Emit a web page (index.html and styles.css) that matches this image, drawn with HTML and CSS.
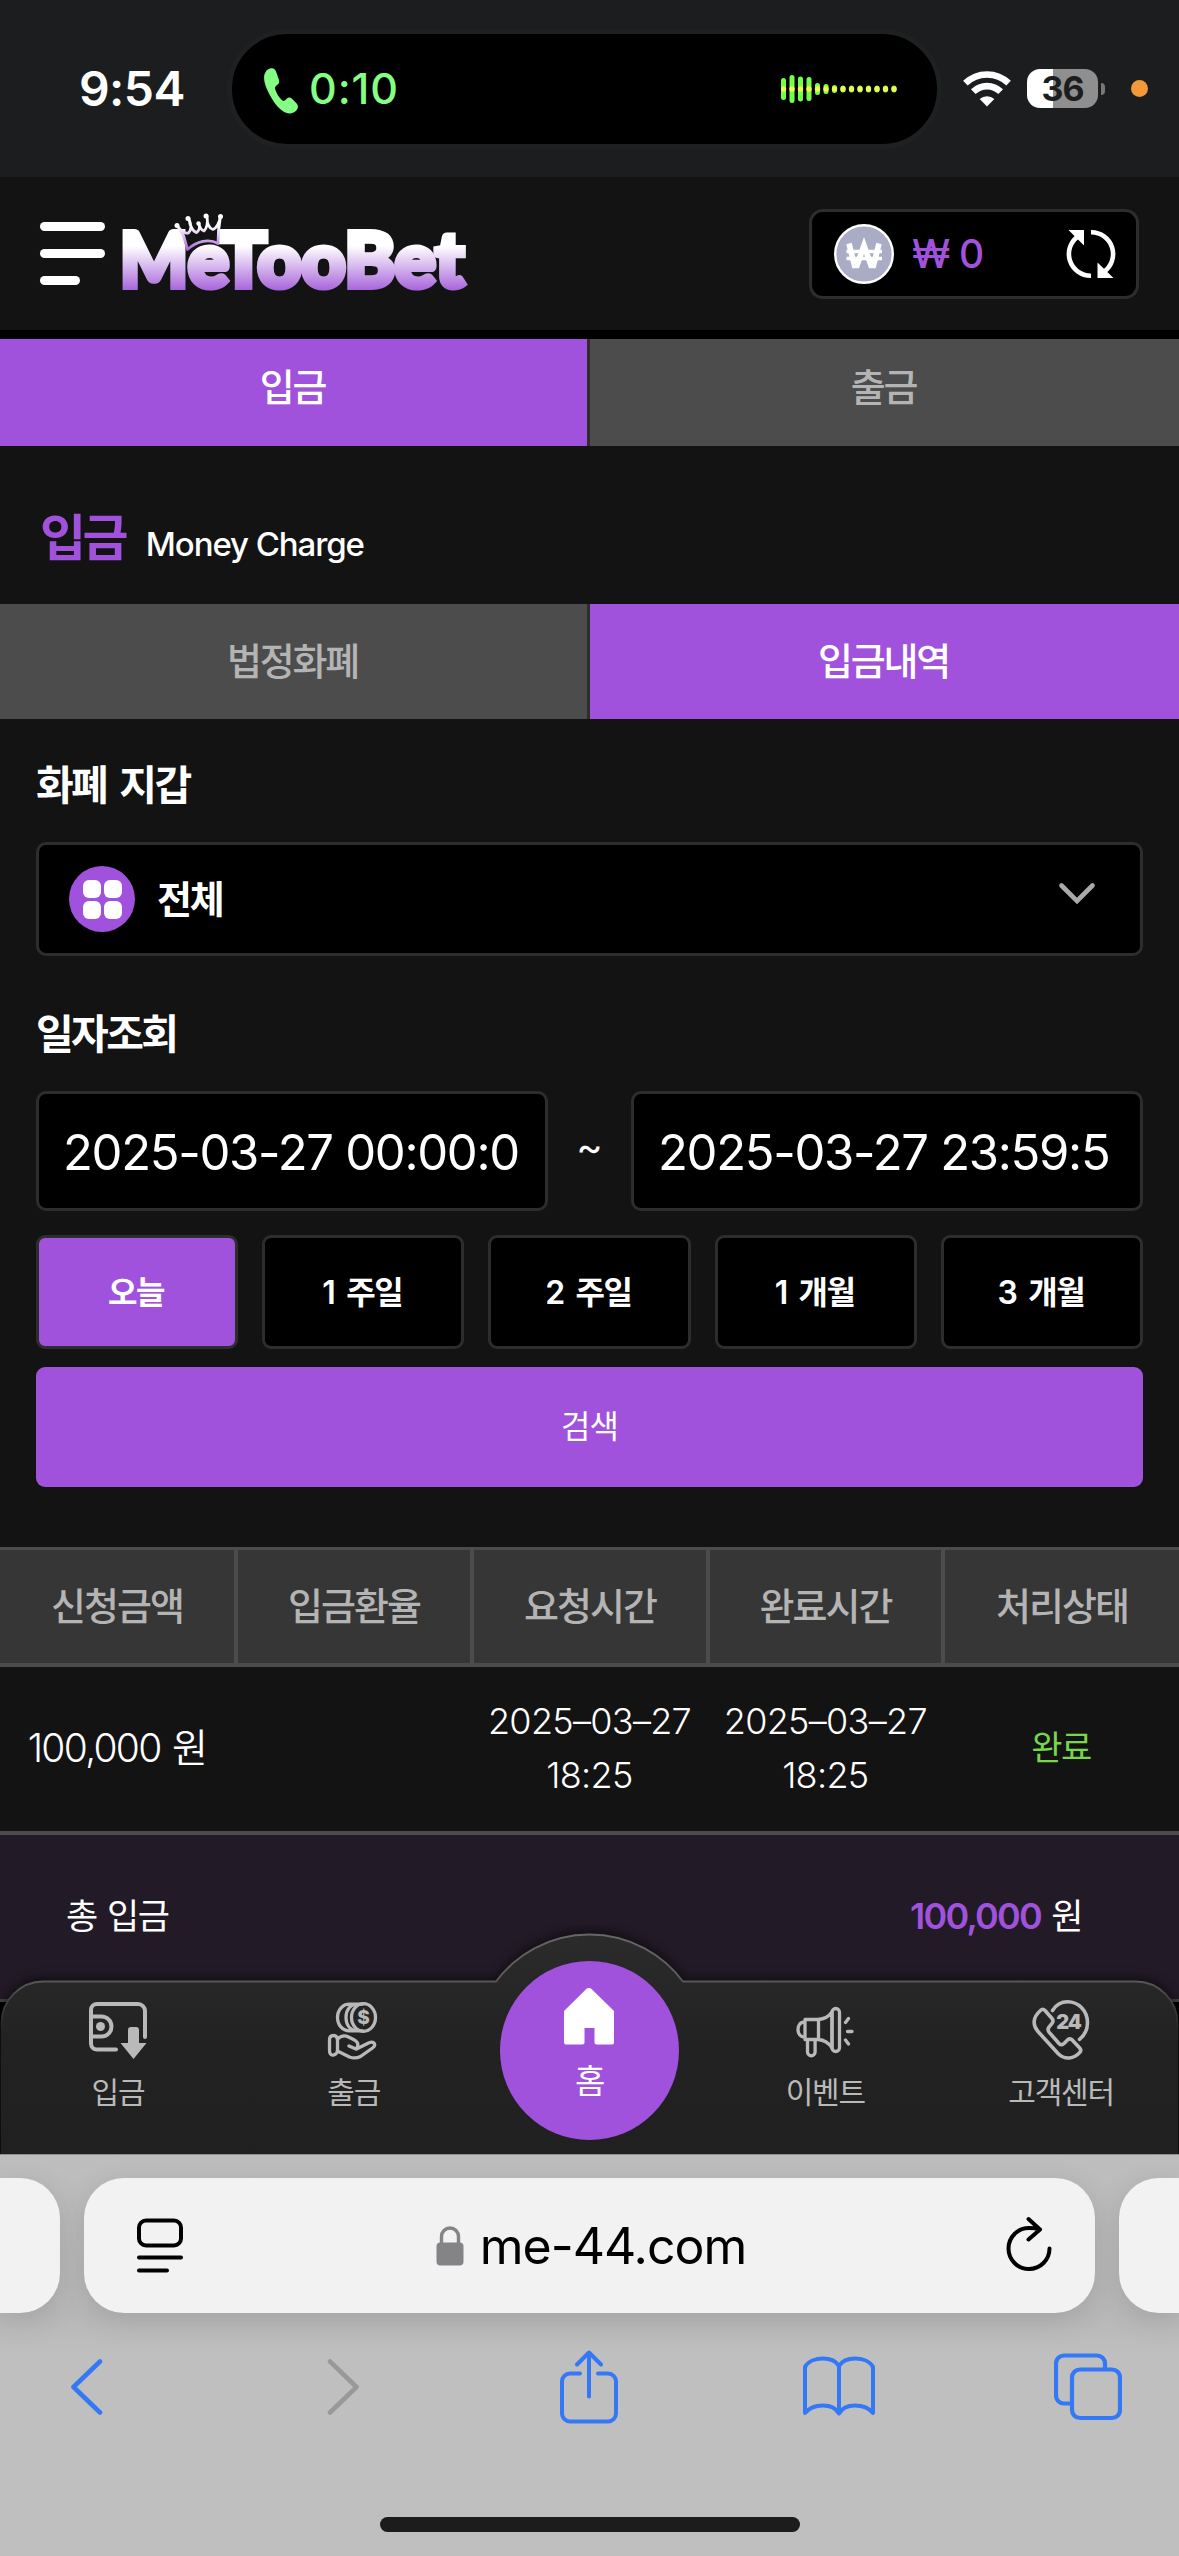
FILE: index.html
```html
<!DOCTYPE html>
<html lang="ko">
<head>
<meta charset="utf-8">
<title>MeTooBet - 입금내역</title>
<link rel="stylesheet" href="styles.css">
</head>
<body>
<div class="screen">
  <div class="status">
    <div class="clock">9:54</div>
    <div class="island">
      <svg class="ico-call" width="34" height="46" viewBox="0 0 34 46"><path d="M6 .6C9-.4 11.300 1 12.200 4L15 12c.6 2.200-.2 3.800-1.800 5-2 1.300-2.500 2.400-2 4.300 1.300 4.300 3.600 7.900 6.800 11 1.300 1 2.300.8 3.500-.4l1.400-1.400c1.600-1.300 3.200-1.300 4.900.1l4.600 4.600c2 2.100 1.900 4.600.3 6.700-2.300 2.900-6 4.200-9.900 3.100-5.600-1.700-10.600-7-15.300-15C2.300 21 0 14.700.1 9.500.2 5 2.500 1.700 6 .6z" fill="#84ff84"/></svg>
      <div class="call-time">0:10</div>
      <svg class="wave" width="117" height="30" viewBox="0 0 117 30">
        <g stroke="#74ff48" stroke-width="5" stroke-linecap="round"><path d="M2.500 6.500v17M11 3.500v23M19.500 5v20M28 5.500v19M36.500 11.500v7M45 12.500v5M53.500 13.500v3M62 14v2M70.500 14v2M79 14v2M87.500 14v2M96 14v2M104.500 14v2M113 14v2"/></g>
        <path d="M2.500 15h.01M11 15h.01M19.500 15h.01M28 15h.01M36.500 15h.01M45 15h.01M53.500 15h.01M62 15h.01M70.500 15h.01M79 15h.01M87.500 15h.01M96 15h.01M104.500 15h.01M113 15h.01" stroke="#f4f84e" stroke-width="5.400" stroke-linecap="round"/>
      </svg>
    </div>
    <svg class="wifi" width="48" height="36" viewBox="0 0 48 36"><g fill="none" stroke="#fff" stroke-width="6.600"><path d="M2.400 12.200a31 31 0 0 1 43.200 0"/><path d="M10.300 20.700a19.500 19.500 0 0 1 27.400 0"/></g><path d="M24 35.500l-7.300-7.400a10.500 10.500 0 0 1 14.600 0z" fill="#fff"/></svg>
    <div class="battery">36</div>
    <div class="nub"></div>
    <div class="mic-dot"></div>
  </div>

  <div class="app">
    <header class="header">
      <div class="burger"><i></i><i></i><i></i></div>
      <svg class="logo" width="356" height="110" viewBox="116 199 356 110">
        <defs><linearGradient id="lg" gradientUnits="userSpaceOnUse" x1="0" y1="246" x2="0" y2="292"><stop offset="0" stop-color="#fff"/><stop offset="1" stop-color="#a45fd9"/></linearGradient>
        <linearGradient id="cg" gradientUnits="userSpaceOnUse" x1="0" y1="226" x2="0" y2="251"><stop offset="0" stop-color="#fff"/><stop offset="1" stop-color="#a45fd9"/></linearGradient></defs>
        <text class="wordmark" fill="url(#lg)" stroke="url(#lg)" y="287"><tspan x="120" textLength="68" lengthAdjust="spacingAndGlyphs">M</tspan><tspan x="188" textLength="276" lengthAdjust="spacingAndGlyphs">eTooBet</tspan></text>
        <path d="M187.500 249.500l-4-14-6-9.500c4 5.500 8 8 11 7 3.500-3.500 3-8 .5-14 1 8 4.500 13 7.500 13.500 3-2 3.500-5 2.500-8.500 1 4 3 6.500 5 7 3-3 4-8 3-15 0 8 2 12.500 6 13.500 4-1.500 6-6 7.500-13l-2 14-.5 13c-9-5-21-2.500-30.500 6z" fill="#131313" stroke="url(#cg)" stroke-width="2.800" stroke-linejoin="round"/>
        <g fill="#fff"><circle cx="177" cy="225.500" r="2.500"/><circle cx="188" cy="218.500" r="2.500"/><circle cx="198.500" cy="223.500" r="2.200"/><circle cx="206" cy="216" r="2.500"/><circle cx="220.500" cy="216.500" r="2.500"/></g>
      </svg>
      <div class="wallet">
        <svg width="60" height="60" viewBox="0 0 60 60"><circle cx="30" cy="30" r="28.800" fill="#a9acc4" stroke="#fff" stroke-width="2.400"/><path d="M15 19.500l5.500 22h2.500l7-20 7 20h2.500l5.500-22" fill="none" stroke="#fff" stroke-width="5.600"/><path d="M12.500 27.500h35.500M12.500 34.500h35.500" stroke="#fff" stroke-width="3.400"/></svg>
        <span class="balance">₩ 0</span>
        <svg class="refresh" width="50" height="50" viewBox="0 0 50 50"><g fill="none" stroke="#fff" stroke-width="4.600"><path d="M25 46.700A21.700 21.700 0 0 1 12.500 7"/><path d="M25 3.300A21.700 21.700 0 0 1 37.500 43"/></g><path d="M2.500 1h15.500v15.500zM47.500 49H31.500V33.500z" fill="#fff"/></svg>
      </div>
    </header>
    <nav class="tabs tabs-main"><div class="tab on">입금</div><div class="tab">출금</div></nav>
    <div class="title"><h1>입금</h1><span>Money Charge</span></div>
    <nav class="tabs tabs-sub"><div class="tab">법정화폐</div><div class="tab on">입금내역</div></nav>

    <section class="form">
      <h2 class="label">화폐 지갑</h2>
      <div class="select">
        <div class="all-icon"><i></i><i></i><i></i><i></i></div>
        <b>전체</b>
        <svg width="38" height="24" viewBox="0 0 38 24"><path d="M3.500 3.500L19 19 34.500 3.500" fill="none" stroke="#aaa" stroke-width="4.600" stroke-linecap="round"/></svg>
      </div>
      <h2 class="label">일자조회</h2>
      <div class="range"><div class="date">2025-03-27 00:00:0</div><div class="tilde">~</div><div class="date">2025-03-27 23:59:5</div></div>
      <div class="periods"><div class="on">오늘</div><div>1 주일</div><div>2 주일</div><div>1 개월</div><div>3 개월</div></div>
      <div class="search">검색</div>
    </section>

    <div class="thead"><div>신청금액</div><div>입금환율</div><div>요청시간</div><div>완료시간</div><div>처리상태</div></div>
    <div class="trow"><div class="amount">100,000 원</div><div></div><div>2025–03–27<br>18:25</div><div>2025–03–27<br>18:25</div><div class="done">완료</div></div>
    <div class="total"><span>총 입금</span><span><b>100,000</b> 원</span></div>
    <div class="rest"></div>

    <div class="dock">
      <svg class="dock-bg" width="1179" height="230" viewBox="0 1924 1179 230">
        <defs><linearGradient id="ng" x1="0" y1="0" x2="0" y2="1"><stop offset="0" stop-color="#2b2b2b"/><stop offset=".5" stop-color="#222"/><stop offset="1" stop-color="#202020"/></linearGradient>
        <linearGradient id="ns" gradientUnits="userSpaceOnUse" x1="0" y1="1934" x2="0" y2="2030"><stop offset="0" stop-color="#666"/><stop offset=".45" stop-color="#5c5c5c"/><stop offset="1" stop-color="#222"/></linearGradient></defs>
        <path class="dock-shape" d="M1.500 2160v-136a42 42 0 0 1 42-42.500H496a116.500 116.500 0 0 1 187 0h452.500a42 42 0 0 1 42 42.500v136z" fill="url(#ng)" stroke="url(#ns)" stroke-width="1.800"/>
      </svg>
      <div class="dock-items">
        <div class="item"><svg width="58" height="58" viewBox="0 0 58 58"><g fill="none" stroke="#b9b9b9" stroke-width="4"><path d="M27 47.500H8a6 6 0 0 1-6-6V8a6 6 0 0 1 6-6h41a7 7 0 0 1 7 7v26" stroke-linecap="round"/><path d="M2 14.500h10.500a10 10 0 0 1 0 20H2"/></g><circle cx="11.500" cy="24.500" r="4.500" fill="#b9b9b9"/><path d="M39 28a3 3 0 0 1 3-3h5a3 3 0 0 1 3 3v13h7.500L44.500 57 31.500 41H39z" fill="#b9b9b9"/></svg>입금</div>
        <div class="item"><svg width="58" height="58" viewBox="0 0 58 58"><g fill="none" stroke="#b9b9b9" stroke-width="3.300" stroke-linecap="round" stroke-linejoin="round"><ellipse cx="38.500" cy="15.500" rx="12" ry="13.800"/><path d="M31 2.200c-6 1-10 6-10 13.300s4 12.300 10 13.300M24.500 2.200c-7 0-12 6-12 13.300s5 13.300 12 13.300M24.500 2.200h13M24.500 28.800h13"/><path d="M8.500 33.500c3 0 4 1.500 4 5v9c0 3.500-1 5-4 5.500s-4-2-4-5v-10c0-3 1-4.500 4-4.500zM12.500 37c3-3 7-4 11-2 4 2 8 3.500 9 6 1 2 0 4-1 6l12-6c6-2.500 8 2 4 5L35.500 54.500c-4 2-7 2-11 .5L12.500 49M31 47l-7-3"/></g><text x="38.500" y="22" class="mini">$</text></svg>출금</div>
        <div class="item item-home"><div class="home"><svg width="52" height="58" viewBox="0 0 52 58"><path d="M1 24L23 2.200a4 4 0 0 1 5.800 0L51 24v31.500a2 2 0 0 1-2 2H33.500a2 2 0 0 1-2-2V41h-10v14.500a2 2 0 0 1-2 2H3a2 2 0 0 1-2-2z" fill="#fff"/></svg>홈</div></div>
        <div class="item"><svg width="58" height="58" viewBox="0 0 58 58"><g fill="none" stroke="#b9b9b9" stroke-width="3.300" stroke-linecap="round" stroke-linejoin="round"><path d="M9 17.500H22c7-.5 11-3 14-7.500v36c-3-5-7-8-14-8.500H9zM9 20C4 20 2 23.500 2 27.500s2 7.500 7 7.500M22.500 17.500v20"/><rect x="36" y="6.500" width="7.500" height="43" rx="3.700"/><path d="M11.500 38v12a3.800 3.800 0 0 0 7.600 0V38"/><path d="M49.500 20.500l3-4M51.500 29.500h4.500M49.500 38l3 4"/></g></svg>이벤트</div>
        <div class="item"><svg width="58" height="60" viewBox="0 0 58 60"><g fill="none" stroke="#b9b9b9" stroke-width="3.600" stroke-linecap="round" stroke-linejoin="round"><path d="M20.500 10.500C24 4.800 29.500 1.800 35.500 1.800c11 0 20 9 20 21 0 7-2.500 12-8 16.500"/><path d="M8.500 10.500c1.500-1.600 3-1.600 4.500 0l7 8c1.300 1.600 1.200 3.200.2 4.600l-3.200 4c-1.200 1.600-1.200 3.400 0 5L27 43.500c1.400 1.500 3.200 1.500 4.800.2l3.900-3.900c1.500-1.300 3-1.300 4.500.1l7.500 8c1.400 1.500 1.300 3 .1 4.500C42 59 33 60 26.500 54L6 31.500c-5.500-6.500-5.500-14 2.500-21z"/></g><text x="36.500" y="29" class="mini big">24</text></svg>고객센터</div>
      </div>
    </div>
  </div>

  <footer class="browser">
    <div class="urls">
      <div class="side left"></div>
      <div class="url">
        <svg width="46" height="56" viewBox="0 0 46 56"><g fill="none" stroke="#000" stroke-width="4" stroke-linecap="round"><rect x="2" y="2.500" width="42" height="25" rx="7"/><path d="M2 39.500h42M2 52.500h28"/></g></svg>
        <div class="host"><svg width="28" height="40" viewBox="0 0 28 40"><rect x=".5" y="16.500" width="27" height="23" rx="4" fill="#848487"/><path d="M5.500 18v-7.500a8.500 8.500 0 0 1 17 0V18" fill="none" stroke="#848487" stroke-width="3.400"/></svg><span>me-44.com</span></div>
        <svg class="reload" width="46" height="56" viewBox="0 0 46 56"><g fill="none" stroke="#000" stroke-width="4" stroke-linecap="round" stroke-linejoin="round"><path d="M43.500 32.500A20.500 20.500 0 1 1 23 12c3.500 0 7 .3 10 1M22.500 3l11.500 10.500-11.500 10"/></g></svg>
      </div>
      <div class="side right"></div>
    </div>
    <div class="tools">
      <svg width="34" height="58" viewBox="0 0 34 58"><path d="M31 3.500L4.500 29 31 54.500" fill="none" stroke="#3478f6" stroke-width="4.600" stroke-linecap="round" stroke-linejoin="round"/></svg>
      <svg class="t-forward" width="34" height="58" viewBox="0 0 34 58"><path d="M3 3.500L29.500 29 3 54.500" fill="none" stroke="#999" stroke-width="4.600" stroke-linecap="round" stroke-linejoin="round"/></svg>
      <svg class="t-share" width="58" height="74" viewBox="0 0 58 74"><g fill="none" stroke="#3478f6" stroke-width="4" stroke-linecap="round" stroke-linejoin="round"><path d="M20 23.500H10a8 8 0 0 0-8 8v32a8 8 0 0 0 8 8h38a8 8 0 0 0 8-8v-32a8 8 0 0 0-8-8H38M29 46.500V3M17 14.500L29 2.500l12 12"/></g></svg>
      <svg class="t-book" width="72" height="62" viewBox="0 0 72 62"><path d="M36 10C33 5 27 2.500 20 2.500S5 5 2 11v46c4-5 11-7.500 18-7.500s13 2.500 16 8c3-5.500 9-8 16-8s14 2.500 18 7.500V11c-3-6-11-8.500-18-8.500S39 5 36 10v47" fill="none" stroke="#3478f6" stroke-width="4" stroke-linejoin="round"/></svg>
      <svg class="t-pages" width="68" height="68" viewBox="0 0 68 68"><g fill="none" stroke="#3478f6" stroke-width="4.200"><rect x="18" y="16.500" width="48" height="48.500" rx="8"/><path d="M17 50.500h-7a8 8 0 0 1-8-8V10.500a8 8 0 0 1 8-8h33a8 8 0 0 1 8 8v5"/></g></svg>
    </div>
    <div class="indicator"></div>
  </footer>
</div>
</body>
</html>
```
FILE: styles.css
```css
* { box-sizing: border-box; }
body { margin: 0; background: #131313; color: #fff; font-family: Inter, "Noto Sans CJK KR", sans-serif; }
svg { display: block; flex: none; }
h1, h2 { margin: 0; }
.screen { width: 1179px; height: 2556px; display: flex; flex-direction: column; overflow: hidden; }

/* status bar */
.status { height: 177px; flex: none; background: #1c1d1f; display: flex; align-items: center; }
.clock { width: 227px; padding: 0 0 1px 79px; font-size: 48px; font-weight: 600; letter-spacing: -.6px; }
.island { width: 715px; height: 120px; border: 5px solid #1f2022; border-radius: 60px; background: #000; display: flex; align-items: center; padding-left: 32px; }
.ico-call { margin-top: 4px; }
.call-time { margin-left: 11px; font-size: 43px; font-weight: 500; color: #84ff84; flex: 1; letter-spacing: .9px; padding-bottom: 2px; }
.wave { margin-right: 39px; }
.wifi { margin-left: 21px; }
.battery { margin-left: 16px; width: 71px; height: 39px; border-radius: 13px; background: linear-gradient(90deg, #fff 26px, #8e8f8e 26px); color: #1c1d1f; font-size: 34px; font-weight: 700; line-height: 39px; text-align: center; letter-spacing: -1px; }
.nub { width: 4px; height: 12px; margin-left: 3px; border-radius: 0 4px 4px 0; background: #77787a; }
.mic-dot { width: 17px; height: 17px; margin-left: 26px; border-radius: 50%; background: #f19a37; }

.app { position: relative; height: 1977px; flex: none; display: flex; flex-direction: column; }
.header { height: 162px; border-bottom: 9px solid #000; display: flex; align-items: center; padding: 0 40px; }
.burger { width: 65px; display: flex; flex-direction: column; gap: 18px; }
.burger i { height: 9px; border-radius: 5px; background: #fff; }
.burger i:last-child { width: 40px; }
.logo { margin-left: 11px; }
.wordmark { font-family: Lato, sans-serif; font-size: 76px; font-weight: 900; stroke-width: 6px; stroke-linejoin: miter; }
.wallet { margin-left: auto; width: 330px; height: 90px; border: 3px solid #2d2d2d; border-radius: 14px; background: #000; display: flex; align-items: center; padding: 0 20px 0 22px; }
.balance { margin-left: 18px; flex: 1; color: #a052dc; font-size: 39px; font-weight: 500; letter-spacing: -.9px; }

.tabs { display: flex; }
.tab { width: 587px; background: #4c4c4c; color: #b4b4b4; display: flex; align-items: center; justify-content: center; padding: 0 2px 4px 0; font-size: 38px; font-weight: 500; letter-spacing: -2.2px; }
.tab + .tab { width: 592px; border-left: 3px solid #2d2d2d; }
.tab.on { background: #a052dc; color: #fff; }
.tabs-main .tab { height: 107px; padding-bottom: 16px; }
.tabs-sub .tab { height: 115px; padding-bottom: 7px; }
.title { height: 158px; padding: 62px 0 0 40px; display: flex; align-items: baseline; line-height: 60px; }
.title h1 { color: #a052dc; font-size: 50px; font-weight: 700; letter-spacing: -3.600px; }
.title span { margin-left: 21px; font-size: 33px; font-weight: 500; letter-spacing: -1.100px; }

.form { padding: 0 36px; }
.label { height: 123px; padding-top: 6px; line-height: 120px; font-size: 41px; font-weight: 700; letter-spacing: -2.600px; word-spacing: 6px; }
.select { height: 114px; border: 3px solid #2d2d2d; border-radius: 10px; background: #000; display: flex; align-items: center; padding: 0 44px 0 30px; }
.all-icon { width: 66px; height: 66px; display: grid; grid-template-columns: 18px 18px; grid-template-rows: 18px 18px; gap: 3px; place-content: center; border-radius: 50%; background: #a052dc; }
.all-icon i { border-radius: 6px; background: #fff; }
.select b { margin-left: 22px; flex: 1; font-size: 38px; letter-spacing: -2.200px; padding-bottom: 5px; }
.select svg { margin-bottom: 10px; }
.select + .label { height: 135px; padding-top: 18px; }
.range { display: flex; }
.date { width: 512px; height: 120px; border: 3px solid #2d2d2d; border-radius: 10px; background: #000; padding-left: 24px; font-size: 49px; line-height: 117px; white-space: nowrap; letter-spacing: -1.300px; }
.tilde { width: 83px; text-align: center; font-size: 40px; line-height: 112px; }
.periods { margin-top: 24px; display: grid; grid-template-columns: repeat(5, 1fr); gap: 24px; }
.periods div { height: 114px; border: 3px solid #2d2d2d; border-radius: 9px; background: #000; text-align: center; line-height: 110px; font-size: 32px; font-weight: 600; letter-spacing: -1.400px; word-spacing: 5px; padding-right: 2px; }
.periods .on { background: #a052dc; }
.search { margin-top: 18px; height: 120px; border-radius: 9px; background: #a052dc; text-align: center; line-height: 120px; font-size: 32px; letter-spacing: -1px; }

.thead { margin-top: 60px; height: 120px; flex: none; border-top: 3px solid #4c4c4c; border-bottom: 4px solid #4c4c4c; background: #363636; display: grid; grid-template-columns: 238px 236px 236px 235px 1fr; }
.thead div { text-align: center; line-height: 112px; color: #b4b4b4; font-size: 38px; font-weight: 500; letter-spacing: -1.900px; border-right: 4px solid #4c4c4c; }
.thead div:last-child { border-right: 0; }
.trow { height: 168px; flex: none; border-bottom: 4px solid #4c4c4c; display: grid; grid-template-columns: repeat(5, 1fr); align-items: center; text-align: center; font-size: 36px; line-height: 54px; font-weight: 350; letter-spacing: -.700px; white-space: nowrap; }
.trow > div { padding-bottom: 3px; }
.trow .amount { font-size: 39px; letter-spacing: -1.700px; word-spacing: 2px; padding-right: 2px; }
.trow .done { color: #79d54a; font-weight: 400; font-size: 34px; letter-spacing: -1.400px; }
.total { height: 167px; flex: none; border-bottom: 3px solid #444; background: #221a27; padding: 0 97px 8px 66px; display: flex; justify-content: space-between; align-items: center; font-size: 35px; letter-spacing: -1.500px; word-spacing: 2px; }
.total b { color: #a052dc; font-size: 36px; font-weight: 600; letter-spacing: -1.800px; }
.rest { flex: 1; background: #000; }

.dock { position: absolute; left: 0; bottom: 0; width: 1179px; height: 230px; overflow: hidden; }
.dock-bg { position: absolute; left: 0; top: 0; }
.dock-shape { filter: drop-shadow(0 -3px 5px rgba(0, 0, 0, .5)); }
.dock-items { position: relative; height: 230px; display: grid; grid-template-columns: repeat(5, 1fr); }
.item { padding-top: 78px; display: flex; flex-direction: column; align-items: center; gap: 10px; color: #b9b9b9; font-size: 30px; line-height: 44px; letter-spacing: -1.2px; }
.item:last-child { padding-top: 76px; }
.item-home { padding-top: 37px; }
.home { width: 179px; height: 179px; border-radius: 50%; background: #a052dc; color: #fff; padding-top: 26px; display: flex; flex-direction: column; align-items: center; gap: 14px; font-size: 33px; }
.mini { font-size: 19px; font-weight: 800; text-anchor: middle; fill: #b9b9b9; letter-spacing: 0; }
.mini.big { font-size: 20px; font-weight: 900; letter-spacing: -1px; }

/* browser chrome */
.browser { height: 402px; flex: none; border-top: 1px solid #8f8f8f; background: linear-gradient(#bdbebd, #b7b8b7 40%, #bfbfbf 50%); }
.urls { display: flex; gap: 24px; padding-top: 23px; }
.side, .url { height: 135px; background: #f2f2f2; box-shadow: 0 6px 30px rgba(0, 0, 0, .12); }
.side { width: 60px; }
.left { border-radius: 0 40px 40px 0; }
.right { border-radius: 40px 0 0 40px; }
.url { width: 1011px; border-radius: 40px; display: flex; align-items: center; justify-content: space-between; padding: 0 43px 0 53px; }
.reload { margin-bottom: 4px; }
.host { display: flex; align-items: center; gap: 16px; color: #000; font-size: 50px; letter-spacing: -1px; margin-right: 7px; }
.tools { height: 74px; margin-top: 37px; display: flex; align-items: center; padding-left: 69px; }
.t-forward { margin-left: 224px; }
.t-share { margin-left: 199px; }
.t-book { margin-left: 185px; }
.t-pages { margin-left: 179px; }
.indicator { width: 420px; height: 15px; margin: 93px auto 0; border-radius: 8px; background: #1c1c1c; }
```
